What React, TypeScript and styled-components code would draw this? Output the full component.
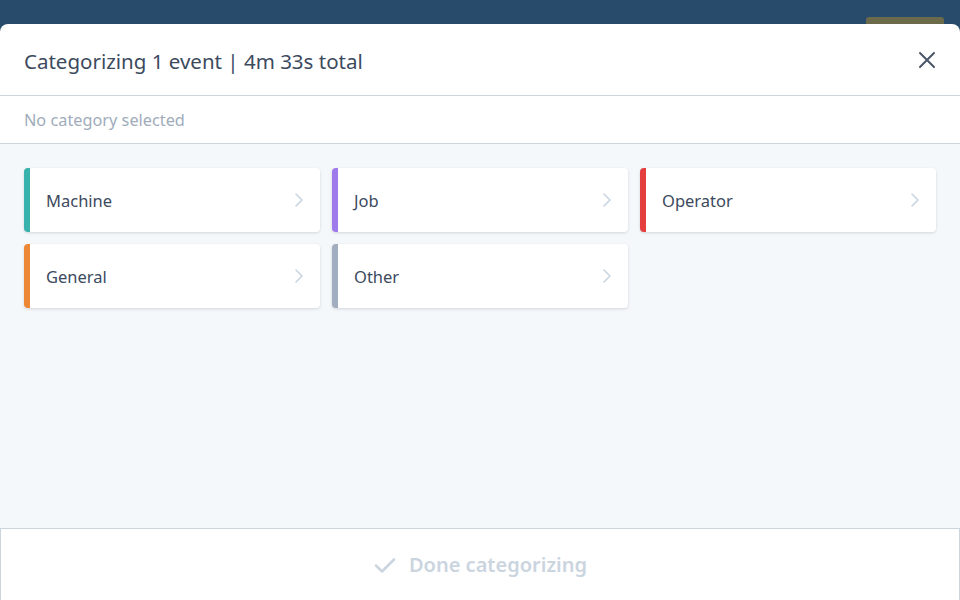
import styled, { createGlobalStyle } from "styled-components";

interface Category {
  id: string;
  label: string;
  color: string;
}

const categories: Category[] = [
  { id: "machine", label: "Machine", color: "#38b2ac" },
  { id: "job", label: "Job", color: "#9f7aea" },
  { id: "operator", label: "Operator", color: "#e53e3e" },
  { id: "general", label: "General", color: "#ed8936" },
  { id: "other", label: "Other", color: "#a0aec0" },
];

const GlobalStyle = createGlobalStyle`
  html, body {
    margin: 0;
    padding: 0;
    height: 100%;
    overflow: hidden;
    font-family: "Noto Sans", "Open Sans", sans-serif;
  }
  #root {
    height: 100%;
  }
`;

const Page = styled.div`
  position: relative;
  height: 100%;
  background: #18324b;
`;

const TopBar = styled.div`
  height: 56px;
  background: #284a6b;
  display: flex;
  align-items: flex-end;
  justify-content: space-between;
  padding: 0 16px 0 20px;
`;

const TopText = styled.span`
  font-size: 14px;
  color: #4f6d73;
  line-height: 40px;
`;

const TopRight = styled.div`
  display: flex;
  align-items: flex-end;
  gap: 24px;
  height: 100%;
`;

const TopButton = styled.div`
  width: 78px;
  height: 40px;
  margin-bottom: -1px;
  border-radius: 3px;
  background: #6b6a4b;
`;

const Modal = styled.div`
  position: absolute;
  top: 24px;
  left: 0;
  right: 0;
  bottom: 0;
  display: flex;
  flex-direction: column;
  background: #fff;
  border-radius: 8px 8px 0 0;
  overflow: hidden;
`;

const Header = styled.div`
  height: 71px;
  display: flex;
  align-items: center;
  justify-content: space-between;
  padding: 0 24px;
  border-bottom: 1px solid #cbd5e0;
  flex-shrink: 0;
`;

const Title = styled.h2`
  margin: 0 0 -2px;
  font-size: 20.5px;
  font-weight: 400;
  color: #3c4a5e;
`;

const CloseButton = styled.button`
  border: none;
  background: none;
  padding: 0;
  margin-right: -3px;
  display: flex;
  color: #4a5568;
  cursor: pointer;
`;

const Selection = styled.div`
  height: 47px;
  display: flex;
  align-items: center;
  padding: 0 24px;
  font-size: 16.3px;
  color: #a0acbb;
  border-bottom: 1px solid #cbd5e0;
  flex-shrink: 0;
`;

const Body = styled.div`
  flex: 1;
  background: #f5f8fb;
  padding: 24px;
  display: grid;
  grid-template-columns: repeat(3, 296px);
  grid-auto-rows: 64px;
  gap: 12px;
  align-content: start;
`;

const Card = styled.button<{ $color: string }>`
  display: flex;
  align-items: center;
  justify-content: space-between;
  padding: 0 16px 0 16px;
  background: #fff;
  border: none;
  border-left: 6px solid ${(p) => p.$color};
  border-radius: 4px;
  box-shadow: 0 1px 3px rgba(45, 55, 72, 0.18);
  font-family: inherit;
  font-size: 16.5px;
  color: #3c4a5e;
  cursor: pointer;
  text-align: left;
`;

const Chevron = styled.span`
  display: flex;
  color: #cbd5e0;
`;

const Footer = styled.button`
  height: 72px;
  flex-shrink: 0;
  display: flex;
  align-items: center;
  justify-content: center;
  gap: 12px;
  background: #fff;
  border: 1px solid #cbd5e0;
  border-bottom: none;
  font-family: inherit;
  font-size: 20px;
  font-weight: 600;
  color: #cbd5e0;
  cursor: default;
`;

export default function App() {
  return (
    <>
      <GlobalStyle />
      <Page>
        <TopBar>
          <TopText>Shift overview</TopText>
          <TopRight>
            <TopText>Last updated 2m ago</TopText>
            <TopButton />
          </TopRight>
        </TopBar>
        <Modal>
          <Header>
            <Title>Categorizing 1 event | 4m 33s total</Title>
            <CloseButton aria-label="Close">
              <svg width="24" height="24" viewBox="0 0 24 24" fill="none" stroke="currentColor" strokeWidth="2" strokeLinecap="round">
                <path d="M5 5l14 14M19 5L5 19" />
              </svg>
            </CloseButton>
          </Header>
          <Selection>No category selected</Selection>
          <Body>
            {categories.map((c) => (
              <Card key={c.id} $color={c.color}>
                {c.label}
                <Chevron>
                  <svg width="10" height="16" viewBox="0 0 10 16" fill="none" stroke="currentColor" strokeWidth="1.6" strokeLinecap="round" strokeLinejoin="round">
                    <path d="M2 2l6 6-6 6" />
                  </svg>
                </Chevron>
              </Card>
            ))}
          </Body>
          <Footer disabled>
            <svg width="24" height="24" viewBox="0 0 24 24" fill="none" stroke="currentColor" strokeWidth="2.5" strokeLinecap="round" strokeLinejoin="round">
              <path d="M3 12.5l6 6L21 6.5" />
            </svg>
            Done categorizing
          </Footer>
        </Modal>
      </Page>
    </>
  );
}
